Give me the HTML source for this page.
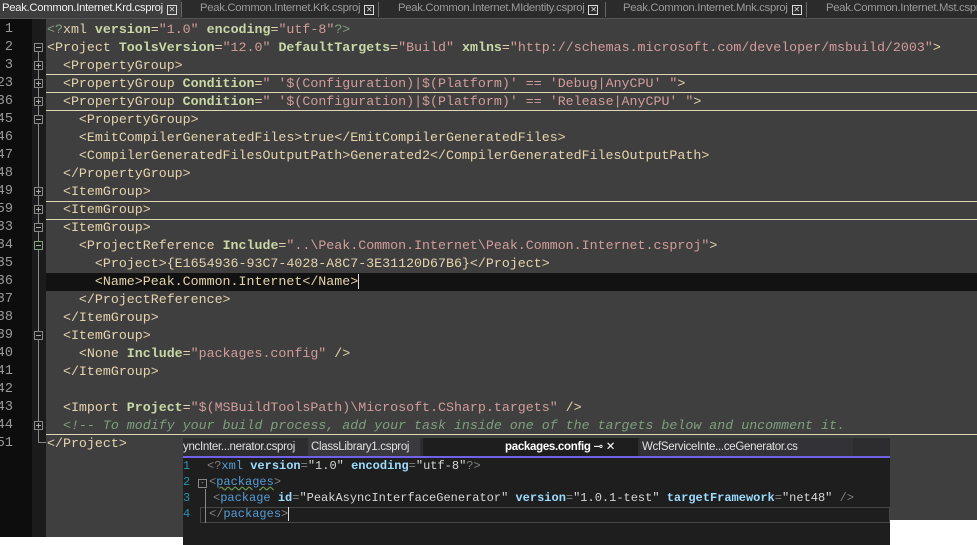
<!DOCTYPE html>
<html><head><meta charset="utf-8"><style>
*{margin:0;padding:0;box-sizing:border-box}
body{width:977px;height:545px;overflow:hidden;background:#fff;position:relative;font-family:"Liberation Sans",sans-serif}
#tabs{position:absolute;left:0;top:0;width:977px;height:19px;background:#2b2b2b;border-bottom:1px solid #555}
.tab{position:absolute;top:0;height:18px;font-size:11.3px;line-height:17px;color:#9a9a9a;white-space:nowrap;letter-spacing:-0.3px}
.tab.act{background:#3e3e3e;color:#f0f0f0}
.x{display:inline-block;width:10px;height:10px;border:1px solid #ddd;font-size:8px;line-height:8px;text-align:center;vertical-align:-1px;margin-left:4px;color:#ddd}
.sep{position:absolute;top:2px;width:1px;height:15px;background:#666}
#gut{position:absolute;left:0;top:19px;width:32px;height:518px;background:#0d0d0d}
#fold{position:absolute;left:32px;top:19px;width:14px;height:518px;background:#1b1b1b}
#ed{position:absolute;left:46px;top:19px;width:931px;height:518px;background:#3f3f3f}
.row{position:absolute;left:0;height:18px;width:977px;font-family:"Liberation Mono",monospace;font-size:13.3px;line-height:18px;white-space:pre;color:#e6d3ad}
.ln{position:absolute;right:0;width:32px;text-align:right;color:#9a9a9a;font-family:"Liberation Mono",monospace;font-size:13.5px;line-height:18px;overflow:hidden;direction:rtl}
.a{color:#c9d8a6;font-weight:bold}.v{color:#d39c9c}.c{color:#7f9f7f;font-style:italic}
.hl{position:absolute;left:46px;width:931px;height:1px;background:#e0d6b8}
.fb{position:absolute;left:34px;width:9px;height:9px;border:1px solid #888;background:#1b1b1b}
.fb:before{content:"";position:absolute;left:1px;top:3px;width:5px;height:1px;background:#aaa}
.fb.p:after{content:"";position:absolute;left:3px;top:1px;width:1px;height:5px;background:#aaa}
#vl{position:absolute;left:38px;top:52px;width:1px;height:390px;background:#888}
#pan{position:absolute;left:183px;top:438px;width:707px;height:107px;background:#1e1e1e}
#ptabs{position:absolute;left:0;top:0;width:707px;height:20px;background:#2d2d30;border-bottom:2px solid #7160e8}
.pt{position:absolute;top:0;height:18px;font-size:11.5px;line-height:18px;color:#e0e0e0;white-space:nowrap;letter-spacing:-0.3px;overflow:hidden}
.pr{position:absolute;left:0;height:16px;width:707px;font-family:"Liberation Mono",monospace;font-size:12px;line-height:16px;white-space:pre;color:#9cdcfe}
.pn{position:absolute;left:0;color:#2b91af}
.t{color:#569cd6}.b{color:#808080}.s{color:#d6d6d6}.at{color:#9cdcfe;font-weight:bold}
</style></head><body>
<div id="tabs">
 <div class="tab act" style="left:0;width:181px;padding-left:2px">Peak.Common.Internet.Krd.csproj<span class="x">✕</span></div>
 <div class="sep" style="left:181px"></div>
 <div class="tab" style="left:200px">Peak.Common.Internet.Krk.csproj<span class="x">✕</span></div>
 <div class="sep" style="left:378px"></div>
 <div class="tab" style="left:398px">Peak.Common.Internet.MIdentity.csproj<span class="x">✕</span></div>
 <div class="sep" style="left:605px"></div>
 <div class="tab" style="left:623px">Peak.Common.Internet.Mnk.csproj<span class="x">✕</span></div>
 <div class="sep" style="left:806px"></div>
 <div class="tab" style="left:826px">Peak.Common.Internet.Mst.csproj</div>
</div>
<div id="gut"></div><div id="fold"></div><div id="ed"></div>
<div style="position:absolute;left:46px;top:273px;width:931px;height:18px;background:#121212"></div>
<div id="vl"></div>
<div class="hl" style="top:74px"></div><div class="hl" style="top:92px"></div><div class="hl" style="top:110px"></div>
<div class="hl" style="top:201px"></div><div class="hl" style="top:219px"></div><div class="hl" style="top:434px"></div>
<div class="fb" style="top:43px"></div>
<div class="fb p" style="top:61px"></div><div class="fb p" style="top:79px"></div><div class="fb p" style="top:97px"></div>
<div class="fb" style="top:115px"></div><div class="fb p" style="top:187px"></div><div class="fb p" style="top:205px"></div>
<div class="fb" style="top:223px"></div><div class="fb" style="top:241px;border-color:#7fa07f"></div><div class="fb" style="top:331px"></div>
<div class="fb p" style="top:421px"></div>
<div style="position:absolute;left:38px;top:442px;width:8px;height:1px;background:#888"></div>

<div class="row" style="top:21px"><span class="ln" style="left:-19px">1</span><span style="position:absolute;left:47px"><span class="c" style="font-style:normal">&lt;?</span>xml <span class="a">version</span>=<span class="v">"1.0"</span> <span class="a">encoding</span>=<span class="v">"utf-8"</span><span class="c" style="font-style:normal">?&gt;</span></span></div>
<div class="row" style="top:39px"><span class="ln" style="left:-19px">2</span><span style="position:absolute;left:47px">&lt;Project <span class="a">ToolsVersion</span>=<span class="v">"12.0"</span> <span class="a">DefaultTargets</span>=<span class="v">"Build"</span> <span class="a">xmlns</span>=<span class="v">"http://schemas.microsoft.com/developer/msbuild/2003"</span>&gt;</span></div>
<div class="row" style="top:57px"><span class="ln" style="left:-19px">3</span><span style="position:absolute;left:47px">  &lt;PropertyGroup&gt;</span></div>
<div class="row" style="top:75px"><span class="ln" style="left:-19px">23</span><span style="position:absolute;left:47px">  &lt;PropertyGroup <span class="a">Condition</span>=<span class="v">" '$(Configuration)|$(Platform)' == 'Debug|AnyCPU' "</span>&gt;</span></div>
<div class="row" style="top:93px"><span class="ln" style="left:-19px">36</span><span style="position:absolute;left:47px">  &lt;PropertyGroup <span class="a">Condition</span>=<span class="v">" '$(Configuration)|$(Platform)' == 'Release|AnyCPU' "</span>&gt;</span></div>
<div class="row" style="top:111px"><span class="ln" style="left:-19px">45</span><span style="position:absolute;left:47px">    &lt;PropertyGroup&gt;</span></div>
<div class="row" style="top:129px"><span class="ln" style="left:-19px">46</span><span style="position:absolute;left:47px">    &lt;EmitCompilerGeneratedFiles&gt;true&lt;/EmitCompilerGeneratedFiles&gt;</span></div>
<div class="row" style="top:147px"><span class="ln" style="left:-19px">47</span><span style="position:absolute;left:47px">    &lt;CompilerGeneratedFilesOutputPath&gt;Generated2&lt;/CompilerGeneratedFilesOutputPath&gt;</span></div>
<div class="row" style="top:165px"><span class="ln" style="left:-19px">48</span><span style="position:absolute;left:47px">  &lt;/PropertyGroup&gt;</span></div>
<div class="row" style="top:183px"><span class="ln" style="left:-19px">49</span><span style="position:absolute;left:47px">  &lt;ItemGroup&gt;</span></div>
<div class="row" style="top:201px"><span class="ln" style="left:-19px">59</span><span style="position:absolute;left:47px">  &lt;ItemGroup&gt;</span></div>
<div class="row" style="top:219px"><span class="ln" style="left:-19px">33</span><span style="position:absolute;left:47px">  &lt;ItemGroup&gt;</span></div>
<div class="row" style="top:237px"><span class="ln" style="left:-19px">34</span><span style="position:absolute;left:47px">    &lt;ProjectReference <span class="a">Include</span>=<span class="v">"..\Peak.Common.Internet\Peak.Common.Internet.csproj"</span>&gt;</span></div>
<div class="row" style="top:255px"><span class="ln" style="left:-19px">35</span><span style="position:absolute;left:47px">      &lt;Project&gt;{E1654936-93C7-4028-A8C7-3E31120D67B6}&lt;/Project&gt;</span></div>
<div class="row" style="top:273px"><span class="ln" style="left:-19px">36</span><span style="position:absolute;left:47px">      &lt;Name&gt;Peak.Common.Internet&lt;/Name&gt;<span style="border-left:1px solid #ddd"></span></span></div>
<div class="row" style="top:291px"><span class="ln" style="left:-19px">37</span><span style="position:absolute;left:47px">    &lt;/ProjectReference&gt;</span></div>
<div class="row" style="top:309px"><span class="ln" style="left:-19px">38</span><span style="position:absolute;left:47px">  &lt;/ItemGroup&gt;</span></div>
<div class="row" style="top:327px"><span class="ln" style="left:-19px">39</span><span style="position:absolute;left:47px">  &lt;ItemGroup&gt;</span></div>
<div class="row" style="top:345px"><span class="ln" style="left:-19px">40</span><span style="position:absolute;left:47px">    &lt;None <span class="a">Include</span>=<span class="v">"packages.config"</span> /&gt;</span></div>
<div class="row" style="top:363px"><span class="ln" style="left:-19px">41</span><span style="position:absolute;left:47px">  &lt;/ItemGroup&gt;</span></div>
<div class="row" style="top:381px"><span class="ln" style="left:-19px">42</span></div>
<div class="row" style="top:399px"><span class="ln" style="left:-19px">43</span><span style="position:absolute;left:47px">  &lt;Import <span class="a">Project</span>=<span class="v">"$(MSBuildToolsPath)\Microsoft.CSharp.targets"</span> /&gt;</span></div>
<div class="row" style="top:417px"><span class="ln" style="left:-19px">44</span><span style="position:absolute;left:47px" class="c">  &lt;!-- To modify your build process, add your task inside one of the targets below and uncomment it.</span></div>
<div class="row" style="top:435px"><span class="ln" style="left:-19px">51</span><span style="position:absolute;left:47px">&lt;/Project&gt;</span></div>

<div id="pan">
 <div id="ptabs">
  <div class="pt" style="left:0;width:122px;background:#2d2d30">yncInter...nerator.csproj</div>
  <div class="pt" style="left:125px;width:112px;padding-left:3px;background:#3a3a3e">ClassLibrary1.csproj</div>
  <div class="pt" style="left:240px;width:215px;padding-left:82px;background:#1e1e1e;font-weight:bold;color:#fff">packages.config <span style="font-weight:normal">⊸ ✕</span></div>
  <div class="pt" style="left:457px;width:213px;padding-left:2px;background:#333337">WcfServiceInte...ceGenerator.cs</div>
 </div>
 <div style="position:absolute;left:17px;top:69px;width:690px;height:16px;border:1px solid #464646"></div>
 <div style="position:absolute;left:22px;top:51px;width:1px;height:34px;background:#888"></div>
 <div style="position:absolute;left:15px;top:41px;width:9px;height:9px;border:1px solid #888;font-size:8px;line-height:6px;color:#aaa;text-align:center">-</div>
 <div class="pr" style="top:20px"><span class="pn">1</span><span style="position:absolute;left:24px"><span class="b">&lt;?</span><span class="t">xml</span> <span class="at">version</span><span class="b">=</span><span class="s">"1.0"</span> <span class="at">encoding</span><span class="b">=</span><span class="s">"utf-8"</span><span class="b">?&gt;</span></span></div>
 <div class="pr" style="top:36px"><span class="pn">2</span><span style="position:absolute;left:26px"><span class="b">&lt;</span><span class="t" style="text-decoration:underline wavy #6a9955">packages</span><span class="b">&gt;</span></span></div>
 <div class="pr" style="top:52px"><span class="pn">3</span><span style="position:absolute;left:30px"><span class="b">&lt;</span><span class="t">package</span> <span class="at">id</span><span class="b">=</span><span class="s">"PeakAsyncInterfaceGenerator"</span> <span class="at">version</span><span class="b">=</span><span class="s">"1.0.1-test"</span> <span class="at">targetFramework</span><span class="b">=</span><span class="s">"net48"</span> <span class="b">/&gt;</span></span></div>
 <div class="pr" style="top:68px"><span class="pn">4</span><span style="position:absolute;left:26px"><span class="b">&lt;/</span><span class="t">packages</span><span class="b">&gt;</span><span style="border-left:1px solid #ddd"></span></span></div>
</div>
<div style="position:absolute;left:0;top:537px;width:183px;height:8px;background:#fff"></div>
<div style="position:absolute;left:890px;top:520px;width:87px;height:25px;background:#fff"></div>
</body></html>
